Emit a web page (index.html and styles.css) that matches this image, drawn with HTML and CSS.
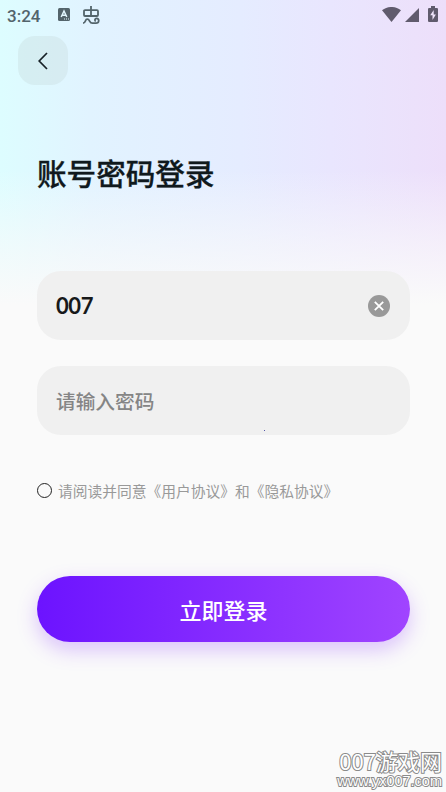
FILE: index.html
```html
<!DOCTYPE html>
<html lang="zh-CN">
<head>
<meta charset="utf-8">
<title>账号密码登录</title>
<link rel="stylesheet" href="styles.css">
</head>
<body>
<div class="screen">
  <header class="status">
    <span class="time">3:24</span>
    <svg class="badge" width="12" height="13" viewBox="0 0 12 13"><rect width="12" height="13" rx="1.5" fill="#53646b"/><path d="M3.2 9 6 3l2.8 6M4.2 7.2h3.6" fill="none" stroke="#e2f6fd" stroke-width="1.5"/><path d="M6 11h1M8 11h1M10 11h1" stroke="#e2f6fd"/></svg>
    <svg class="bug" width="18" height="19" viewBox="0 0 18 19" fill="none" stroke="#53646b" stroke-width="1.8"><path d="M9 0v11M3 4.2h12a1 1 0 0 1 1 1V9a1 1 0 0 1-1 1H3a1 1 0 0 1-1-1V5.2a1 1 0 0 1 1-1Z"/><path d="M1 17.2c3 0 1.8-4 4.2-4 3 0 1.8 4 5.2 4H14c3.5 0 3.5-4.8.6-4.8-1.8 0-2.2 2.3-.8 2.6"/></svg>
    <span class="signals">
      <svg width="19" height="15" viewBox="0 0 19 15"><path d="M0 3.2C5.6-1.1 13.4-1.1 19 3.2L9.5 15Z" fill="#605b6d"/></svg>
      <svg width="14" height="14" viewBox="0 0 14 14"><path d="M14 0v14H0Z" fill="#605b6d"/></svg>
      <svg class="battery" width="10" height="16" viewBox="0 0 10 16"><path d="M3 0h4v2h2.2l.8.8v12.4l-.8.8H.8l-.8-.8V2.8L.8 2H3Z" fill="#605b6d"/><path d="M5.7 4 2.2 9.3h2.3V14l3.4-5.6H5.7Z" fill="#f0e5fc"/></svg>
    </span>
  </header>
  <button class="back" aria-label="返回"><svg width="10" height="18" viewBox="0 0 10 18"><path d="M9 1 1.2 9 9 17" fill="none" stroke="#172126" stroke-width="1.7"/></svg></button>
  <main class="form">
    <h1 class="title">账号密码登录</h1>
    <div class="field account">
      <span class="value">007</span>
      <svg width="22" height="22" viewBox="0 0 22 22"><circle cx="11" cy="11" r="11" fill="#999"/><path d="m6.8 6.8 8.4 8.4m0-8.4-8.4 8.4" stroke="#fff" stroke-width="1.8"/></svg>
    </div>
    <div class="field password">
      <span class="placeholder">请输入密码</span>
      <i class="speck"></i>
    </div>
    <div class="agreement"><span class="radio"></span><span>请阅读并同意《用户协议》和《隐私协议》</span></div>
    <button class="submit">立即登录</button>
  </main>
  <div class="watermark"><div class="site">007游戏网</div><div class="url">www.yx007.com</div></div>
</div>
</body>
</html>
```
FILE: styles.css
```css
* { box-sizing: border-box; }
body { margin: 0; font-family: "Noto Sans CJK SC", sans-serif; }
button { border: 0; padding: 0; font-family: inherit; }
svg { display: block; flex: none; }
.screen {
  position: relative;
  height: 792px;
  overflow: hidden;
  background:
    linear-gradient(180deg, rgba(250,250,250,0) 170px, rgba(250,250,250,.55) 240px, #fafafa 305px),
    linear-gradient(90deg, #ddfdff 0, #e1f3ff 90px, #e5ecff 240px, #e9e6fe 330px, #eddffa 446px);
}
.status { height: 36px; display: flex; align-items: flex-start; padding: 6px 8px 0 7px; }
.time { width: 51px; font: 500 17px/20px Roboto, sans-serif; color: #53646b; }
.badge { margin-top: 2px; }
.bug { margin-left: 12px; }
.signals { margin-left: auto; display: flex; align-items: flex-end; height: 16px; gap: 4px; }
.battery { margin-left: 5px; }
.back {
  display: flex; align-items: center; justify-content: center;
  width: 50px; height: 49px; margin-left: 18px;
  border-radius: 17px; background: rgba(195,215,215,.32);
}
.form { padding: 0 36px 0 37px; }
.title { margin: 68px 0 0; font-size: 29.6px; line-height: 40px; font-weight: 500; -webkit-text-stroke: .3px #10191d; color: #10191d; }
.field {
  position: relative;
  display: flex; align-items: center; justify-content: space-between;
  height: 69px; padding: 0 20px 0 19px;
  border-radius: 24px; background: #f0f0f0;
}
.account { margin-top: 78px; }
.password { margin-top: 26px; }
.value { font: 700 22px/26px Lato, sans-serif; color: #17191a; letter-spacing: -.4px; }
.placeholder { font-size: 19.7px; line-height: 28px; font-weight: 500; color: #858585; }
.speck { position: absolute; left: 227px; top: 64px; width: 1px; height: 1px; background: #5357a8; }
.agreement { display: flex; align-items: center; height: 24px; margin-top: 43px; font-size: 14.75px; color: #999; white-space: nowrap; }
.radio { width: 15px; height: 15px; margin-right: 6px; border: 1.4px solid #222; border-radius: 50%; }
.submit {
  display: block; width: 373px; height: 66px; margin-top: 74px;
  border-radius: 33px; background: linear-gradient(90deg, #6c13ff, #a044ff);
  box-shadow: 0 8px 20px rgba(137,52,255,.28);
  font-size: 22px; font-weight: 500; color: #fff;
}
.watermark { position: absolute; right: 4px; bottom: 2px; text-align: right; color: #fff; -webkit-text-stroke: 2px #8a8a8a; paint-order: stroke fill; }
.site { font-size: 22px; line-height: 26px; white-space: nowrap; }
.url { font: 14.5px/17px "Liberation Sans", sans-serif; }
```
